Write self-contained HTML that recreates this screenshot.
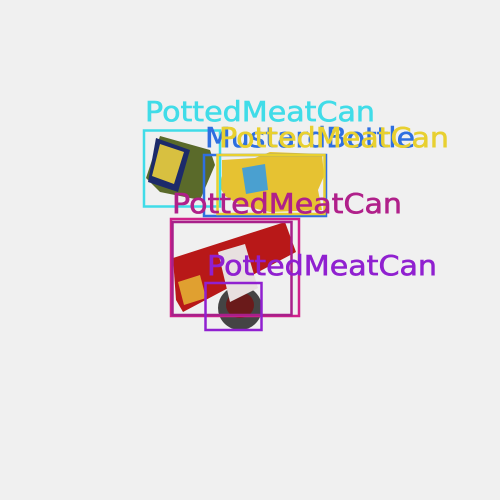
<!DOCTYPE html>
<html><head><style>html,body{margin:0;padding:0;background:#f0f0f0;width:500px;height:500px;overflow:hidden}</style></head><body>
<svg width="500" height="500" viewBox="0 0 500 500" xmlns="http://www.w3.org/2000/svg" style="display:block">
<rect width="500" height="500" fill="#f0f0f0"/>
<polygon points="160,136 210,150 215,165 200,200 160,192 146,178" fill="#5a6a2a"/>
<polygon points="156,138 190,150 178,192 148,182" fill="#1c2a6a"/>
<polygon points="160,144 184,152 174,184 152,176" fill="#d8c040"/>
<polygon points="222,160 255,158 270,152 322,154 324,176 318,190 322,210 270,212 240,205 225,196 219,186 222,176" fill="#e6c232"/>
<polygon points="242,168 265,164 268,190 246,194" fill="#4aa0d0"/>
<polygon points="173,258 285,222 296,252 183,312 176,300" fill="#b81818"/>
<polygon points="178,282 200,275 206,298 184,305" fill="#e0a030"/>
<ellipse cx="240" cy="308" rx="22" ry="22" fill="#444"/>
<ellipse cx="240" cy="305" rx="14" ry="13" fill="#6a1a1a"/>
<polygon points="218,252 245,244 258,288 230,302" fill="#e8e0e0"/>
<g fill="none" stroke-width="2.5">
<rect x="144" y="130.5" width="76" height="76" stroke="#40dce8"/>
<rect x="204" y="155" width="122" height="61" stroke="#2f6fe0"/>
<rect x="217.5" y="155" width="107" height="59" stroke="#e8d030"/>
<rect x="171" y="219" width="128" height="97" stroke="#d0208a"/>
<rect x="172.5" y="222" width="119" height="93" stroke="#a8208a"/>
<rect x="205.5" y="283" width="56" height="47" stroke="#9020d0"/>
</g>
<g font-family="'DejaVu Sans','Liberation Sans',sans-serif" font-size="28" stroke-width="0.6">
<text x="145" y="121" fill="#40dce8" stroke="#40dce8" textLength="230" lengthAdjust="spacingAndGlyphs">PottedMeatCan</text>
<text x="205" y="147" fill="#2f6fe0" stroke="#2f6fe0" textLength="210" lengthAdjust="spacingAndGlyphs">MustardBottle</text>
<text x="219" y="147" fill="#e8d030" stroke="#e8d030" textLength="230" lengthAdjust="spacingAndGlyphs">PottedMeatCan</text>
<text x="172" y="213" fill="#b0208a" stroke="#b0208a" textLength="230" lengthAdjust="spacingAndGlyphs">PottedMeatCan</text>
<text x="207" y="275" fill="#9020d0" stroke="#9020d0" textLength="230" lengthAdjust="spacingAndGlyphs">PottedMeatCan</text>
</g>
</svg>
</body></html>
